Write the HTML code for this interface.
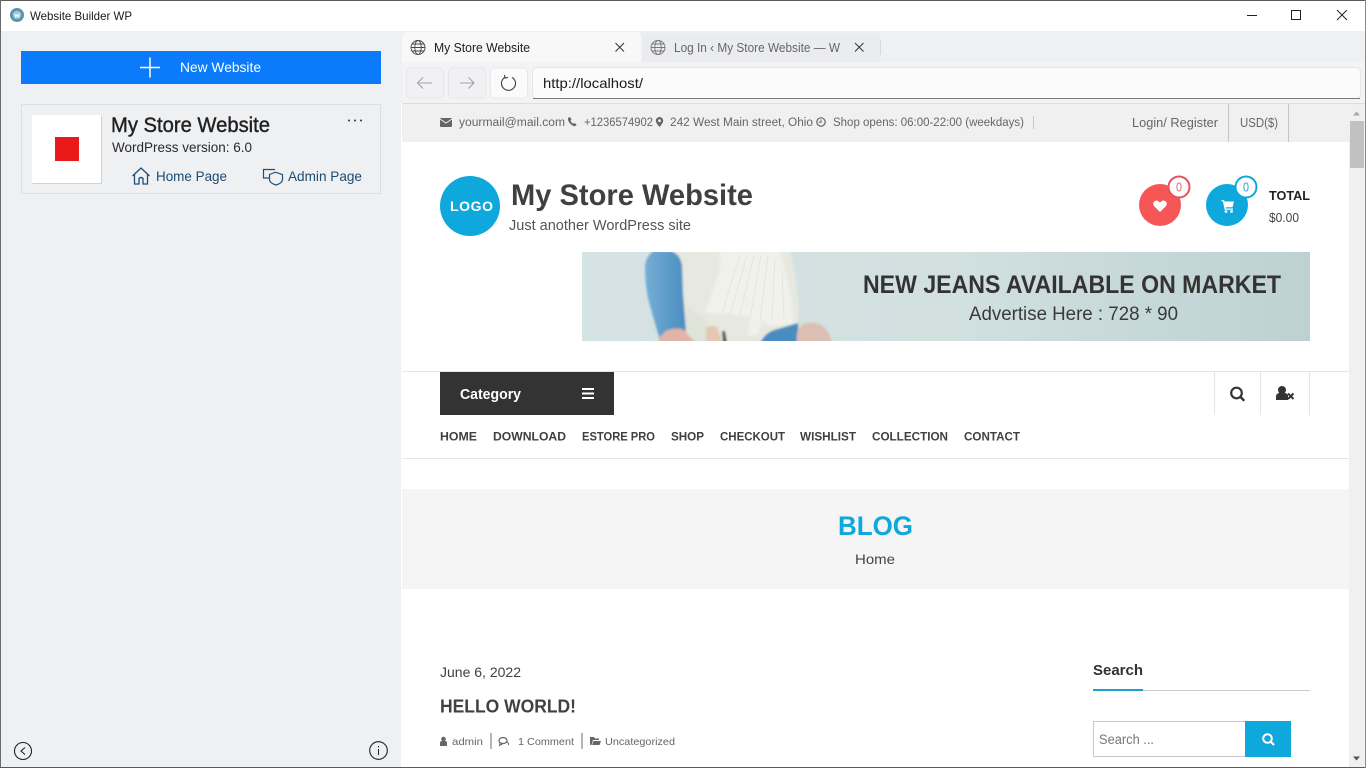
<!DOCTYPE html>
<html lang="en">
<head>
<meta charset="utf-8">
<title>Website Builder WP</title>
<style>
html,body{margin:0;padding:0;width:1366px;height:768px;overflow:hidden;background:#fff}
svg{display:block;position:absolute;left:0;top:0}
text{font-family:"Liberation Sans",Arial,sans-serif;white-space:pre}
.b{font-weight:700}
</style>
</head>
<body>
<svg width="1366" height="768" viewBox="0 0 1366 768" xmlns="http://www.w3.org/2000/svg">
<defs>
<clipPath id="bn"><rect x="582" y="252" width="728" height="89"/></clipPath>
<linearGradient id="bg" x1="0" x2="1" y1="0" y2="0"><stop offset="0" stop-color="#d6e3e4"/><stop offset=".5" stop-color="#d2e0e0"/><stop offset="1" stop-color="#bdd1d3"/></linearGradient>
<linearGradient id="jean" x1="0" x2="1" y1="0" y2="0"><stop offset="0" stop-color="#75aed5"/><stop offset="1" stop-color="#4a8dc0"/></linearGradient>
<filter id="sf" x="-5%" y="-5%" width="110%" height="110%"><feGaussianBlur stdDeviation="1"/></filter>
</defs>

<!-- window -->
<rect width="1366" height="768" fill="#fff"/>
<rect x="1" y="31" width="400" height="736" fill="#eff0f2"/>
<rect x="401" y="31" width="965" height="72" fill="#eff0f2"/>

<!-- titlebar -->
<circle cx="17" cy="15" r="7" fill="#5a93ad"/><circle cx="17" cy="15" r="4.2" fill="#9cc4d6"/>
<path d="M14.5 13.5l1.3 3.5 1.2-2.6 1.2 2.6 1.3-3.5" fill="none" stroke="#fff" stroke-width="1"/>
<text x="30" y="20" font-size="12" fill="#1a1a1a" textLength="102" lengthAdjust="spacingAndGlyphs">Website Builder WP</text>
<path d="M1247 15.500h10" stroke="#222" stroke-width="1"/>
<rect x="1291.500" y="10.500" width="9" height="9" fill="none" stroke="#222" stroke-width="1"/>
<path d="M1337 10l10 10M1347 10l-10 10" stroke="#222" stroke-width="1"/>

<!-- sidebar -->
<rect x="21" y="51" width="360" height="33" fill="#0b7bfb"/>
<path d="M150 57.500v20M140 67.500h20" stroke="#fff" stroke-width="1.500"/>
<text x="180" y="72" font-size="14" fill="#fff" textLength="81" lengthAdjust="spacingAndGlyphs">New Website</text>
<rect x="21.500" y="104.500" width="359" height="89" fill="#eff0f2" stroke="#dedfe2"/>
<rect x="32" y="115" width="69.500" height="68.500" fill="#fff"/>
<path d="M32.500 183.500h69v-68" fill="none" stroke="#d0d1d4"/>
<rect x="55" y="137" width="24" height="24" fill="#ea1a1a"/>
<text x="111" y="132" font-size="21" fill="#202020" textLength="159" lengthAdjust="spacingAndGlyphs" stroke="#202020" stroke-width=".4">My Store Website</text>
<text x="112" y="152" font-size="14" fill="#2a2a2a" textLength="140" lengthAdjust="spacingAndGlyphs">WordPress version: 6.0</text>
<circle cx="349" cy="120.500" r="1" fill="#333"/><circle cx="355" cy="120.500" r="1" fill="#333"/><circle cx="361" cy="120.500" r="1" fill="#333"/>
<path d="M132.500 176l8.500-8 8.500 8M134.500 174.500v9.500h4.500v-5.500q2-2 4 0v5.500h4.500v-9.500" fill="none" stroke="#1f4e79" stroke-width="1.300"/>
<text x="156" y="181" font-size="14" fill="#1b4a72" textLength="71" lengthAdjust="spacingAndGlyphs">Home Page</text>
<path d="M275 169.500h-11.500v8.500h6" fill="none" stroke="#1f4e79" stroke-width="1.200"/>
<path d="M269.500 174.500l6-2.300 7 2.300v5q0 3.500-6.500 5.500q-6.500-2-6.500-5.500z" fill="#eff0f2" stroke="#1f4e79" stroke-width="1.200"/>
<text x="288" y="181" font-size="14" fill="#1b4a72" textLength="74" lengthAdjust="spacingAndGlyphs">Admin Page</text>
<circle cx="23" cy="751" r="8.500" fill="none" stroke="#222" stroke-width="1.100"/>
<path d="M25 747.500l-4 3.500 4 3.500" fill="none" stroke="#222" stroke-width="1.100"/>
<circle cx="378.500" cy="750.500" r="8.800" fill="none" stroke="#222" stroke-width="1.100"/>
<path d="M378.500 749v6M378.500 746v1.400" stroke="#222" stroke-width="1"/>

<!-- tabs -->
<path d="M402 62v-24q0-6 6-6h227q6 0 6 6v24z" fill="#f8f8f9"/>
<path d="M642 62v-26q0-3 3-3h235v29z" fill="#ebecee"/>
<rect x="402" y="62" width="964" height="41" fill="#f3f3f5"/>
<g fill="none" stroke="#444" stroke-width=".9"><circle cx="418" cy="47.500" r="7"/><ellipse cx="418" cy="47.500" rx="3.200" ry="7"/><path d="M411 47.500h14M412 44h12M412 51h12"/></g>
<text x="434" y="52" font-size="12.500" fill="#1d1d1d" textLength="96" lengthAdjust="spacingAndGlyphs">My Store Website</text>
<path d="M615.500 43l8.500 8.500M624 43l-8.500 8.500" stroke="#333" stroke-width="1"/>
<g fill="none" stroke="#777" stroke-width=".9"><circle cx="658" cy="47.500" r="7"/><ellipse cx="658" cy="47.500" rx="3.200" ry="7"/><path d="M651 47.500h14M652 44h12M652 51h12"/></g>
<text x="674" y="52" font-size="12.500" fill="#666" textLength="166" lengthAdjust="spacingAndGlyphs">Log In ‹ My Store Website — W</text>
<path d="M855 43l8.500 8.500M863.500 43l-8.500 8.500" stroke="#333" stroke-width="1"/>
<path d="M880.500 40v15" stroke="#d8d8da"/>

<!-- toolbar -->
<rect x="406.500" y="68" width="37" height="30" rx="4" fill="#f1f1f3" stroke="#e6e6e8"/>
<rect x="448.500" y="68" width="37" height="30" rx="4" fill="#f1f1f3" stroke="#e6e6e8"/>
<rect x="490.500" y="68" width="37" height="30" rx="4" fill="#fbfbfb" stroke="#e8e8ea"/>
<path d="M418 83h14M423 77.500l-5.500 5.500 5.500 5.500" fill="none" stroke="#a2a2a4" stroke-width="1.100"/>
<path d="M460 83h14M468.500 77.500l5.500 5.500-5.500 5.500" fill="none" stroke="#a2a2a4" stroke-width="1.100"/>
<path d="M505 77.300a7 7 0 1 0 7 0M504.500 75l.5 3 3-.5" fill="none" stroke="#333" stroke-width="1"/>
<rect x="532.500" y="67.500" width="828" height="31" rx="4" fill="#fbfbfb" stroke="#e6e6e8"/>
<path d="M533 98.500h827" stroke="#7a7a7a"/>
<text x="543" y="88" font-size="14" fill="#1a1a1a" textLength="100" lengthAdjust="spacingAndGlyphs">http://localhost/</text>

<!-- page -->
<rect x="402" y="103" width="964" height="664" fill="#fff"/>
<rect x="402" y="103" width="964" height="1" fill="#dcdcdc"/>
<rect x="402" y="104" width="947" height="38" fill="#f0f0f0"/>

<!-- topbar -->
<rect x="440" y="118" width="12" height="9" rx="1" fill="#666"/><path d="M440 119l6 4 6-4" fill="none" stroke="#f0f0f0" stroke-width="1"/>
<text x="459" y="126" font-size="11.500" fill="#666" textLength="106" lengthAdjust="spacingAndGlyphs">yourmail@mail.com</text>
<path d="M568.500 117.500q-1 1 0 3.800q1.500 3.200 5 4.700q2 .5 3.200-1l-2-2-1.500.8q-2-1-2.700-3l1-1.200-1.500-2.600z" fill="#666"/>
<text x="584" y="126" font-size="11.500" fill="#666" textLength="69" lengthAdjust="spacingAndGlyphs">+1236574902</text>
<path d="M659.500 117a3.700 3.700 0 0 0-3.700 3.700q0 2 3.700 6.300q3.700-4.300 3.700-6.300a3.700 3.700 0 0 0-3.700-3.700zm0 2.300a1.400 1.400 0 1 1 0 2.800a1.400 1.400 0 0 1 0-2.800z" fill="#666"/>
<text x="670" y="126" font-size="11.500" fill="#666" textLength="143" lengthAdjust="spacingAndGlyphs">242 West Main street, Ohio</text>
<circle cx="821" cy="122" r="4.200" fill="none" stroke="#666" stroke-width="1.200"/><path d="M821 119.500v2.800h-2.300" fill="none" stroke="#666"/>
<text x="833" y="126" font-size="11.500" fill="#666" textLength="191" lengthAdjust="spacingAndGlyphs">Shop opens: 06:00-22:00 (weekdays)</text>
<path d="M1033.500 116v13" stroke="#c6c6c6"/>
<text x="1132" y="127" font-size="13" fill="#666" textLength="86" lengthAdjust="spacingAndGlyphs">Login/ Register</text>
<path d="M1228.500 104v38M1288.500 104v38" stroke="#c4c4c4"/>
<text x="1240" y="127" font-size="13" fill="#666" textLength="38" lengthAdjust="spacingAndGlyphs">USD($)</text>

<!-- header -->
<circle cx="470" cy="206" r="30" fill="#0ea8dd"/>
<text class="b" x="450" y="211" font-size="14" fill="#fff" textLength="43" lengthAdjust="spacing">LOGO</text>
<text class="b" x="511" y="205" font-size="30" fill="#404040" textLength="242" lengthAdjust="spacingAndGlyphs">My Store Website</text>
<text x="509" y="230" font-size="14.500" fill="#555" textLength="182" lengthAdjust="spacingAndGlyphs">Just another WordPress site</text>

<circle cx="1160" cy="205" r="21" fill="#f65656"/>
<path d="M1160 212l-5.800-5.800q-1.700-2.200-.5-4.200q1.900-2.500 4.500-1l1.800 1.500 1.800-1.500q2.600-1.500 4.500 1q1.200 2-.5 4.200z" fill="#fff"/>
<circle cx="1179" cy="187" r="10.500" fill="#fff" stroke="#e8515c" stroke-width="2"/>
<text x="1176" y="191.500" font-size="12.500" fill="#e8606a" textLength="6" lengthAdjust="spacingAndGlyphs">0</text>
<circle cx="1227" cy="205" r="21" fill="#0ea8dd"/>
<path d="M1221.500 200h2.500l.6 1.500h9.400l-1.500 5.800h-6.800l.3 1.200h7v1.300h-8.300l-1.800-8.500h-1.400z" fill="#fff"/>
<circle cx="1226" cy="211.500" r="1.400" fill="#fff"/><circle cx="1231.500" cy="211.500" r="1.400" fill="#fff"/>
<circle cx="1246" cy="187" r="10.500" fill="#fff" stroke="#0ea8dd" stroke-width="2"/>
<text x="1243" y="191.500" font-size="12.500" fill="#2f9fd0" textLength="6" lengthAdjust="spacingAndGlyphs">0</text>
<text class="b" x="1269" y="200" font-size="12.500" fill="#222" textLength="41" lengthAdjust="spacingAndGlyphs">TOTAL</text>
<text x="1269" y="222" font-size="12.500" fill="#444" textLength="30" lengthAdjust="spacingAndGlyphs">$0.00</text>

<!-- banner -->
<rect x="582" y="252" width="728" height="89" fill="url(#bg)"/>
<g clip-path="url(#bn)">
<g filter="url(#sf)">
<path d="M672 250h118l5 25 4 30-1 20-34 16h-76l-14-45z" fill="#e7e9e0"/>
<path d="M645 266q1-10 9-15h17q9 3 11 14l1 28 3 38-26 9q-9-30-12-42q-3-14-3-32z" fill="url(#jean)"/>
<path d="M720 250h60l6 24 6 30 1 20-24 2-6-6-6 15h-9l2-18-24-3-21-1 7-20 8-24z" fill="#f0f1eb"/>
<path d="M686 305l19 14 6 22h-24z" fill="#dfe3d9"/>
<path d="M760 343q5-10 14-13l24-7v20z" fill="#4a8cbf"/>
<path d="M797 343q-2-18 10-20q20-3 25 20z" fill="#dcbfb2"/>
<path d="M658 343q3-10 10-13q10-3 16 0l6 7 7 6z" fill="#e0b4a6"/>
<path d="M706 327q7-3 12 1l4 15h-16z" fill="#e5c8b2"/>
<path d="M722 331l1 12h4l-2-12z" fill="#3a4256"/>
</g>
<g stroke="#d9dcd2" stroke-width=".7" fill="none" opacity=".7">
<path d="M740 255l-18 58M747 255l-17 60M754 255l-14 60M761 255l-11 64M768 255l-8 66M775 258l-3 62M782 268l2 52"/>
</g>
</g>
<text class="b" x="863" y="293" font-size="25" fill="#333" textLength="418" lengthAdjust="spacingAndGlyphs">NEW JEANS AVAILABLE ON MARKET</text>
<text x="969" y="320" font-size="19" fill="#3a3a3a" textLength="209" lengthAdjust="spacingAndGlyphs">Advertise Here : 728 * 90</text>

<!-- nav -->
<rect x="402" y="371" width="947" height="1" fill="#e5e5e5"/>
<rect x="440" y="372" width="174" height="43" fill="#333"/>
<text class="b" x="460" y="399" font-size="14.500" fill="#fff" textLength="61" lengthAdjust="spacingAndGlyphs">Category</text>
<path d="M582 389h12M582 393.500h12M582 398h12" stroke="#fff" stroke-width="2"/>
<path d="M1214.500 372v43M1260.500 372v43M1309.500 372v43" stroke="#e5e5e5"/>
<circle cx="1236.500" cy="393" r="5.300" fill="none" stroke="#333" stroke-width="2.200"/>
<path d="M1240.500 397l3.800 3.800" stroke="#333" stroke-width="2.400"/>
<circle cx="1282" cy="390" r="4" fill="#333"/>
<path d="M1276 400v-3q0-3.500 3-4h6q2.500.5 3 2.500v4.500z" fill="#333"/>
<path d="M1288 393.500l5.500 5.500M1293.500 393.500l-5.500 5.500" stroke="#333" stroke-width="2"/>
<g font-size="12" font-weight="700" fill="#404040">
<text x="440" y="440.500" textLength="37" lengthAdjust="spacingAndGlyphs">HOME</text>
<text x="493" y="440.500" textLength="73" lengthAdjust="spacingAndGlyphs">DOWNLOAD</text>
<text x="582" y="440.500" textLength="73" lengthAdjust="spacingAndGlyphs">ESTORE PRO</text>
<text x="671" y="440.500" textLength="33" lengthAdjust="spacingAndGlyphs">SHOP</text>
<text x="720" y="440.500" textLength="65" lengthAdjust="spacingAndGlyphs">CHECKOUT</text>
<text x="800" y="440.500" textLength="56" lengthAdjust="spacingAndGlyphs">WISHLIST</text>
<text x="872" y="440.500" textLength="76" lengthAdjust="spacingAndGlyphs">COLLECTION</text>
<text x="964" y="440.500" textLength="56" lengthAdjust="spacingAndGlyphs">CONTACT</text>
</g>
<rect x="402" y="458" width="947" height="1" fill="#e5e5e5"/>

<!-- blog band -->
<rect x="402" y="489" width="947" height="100" fill="#f5f5f5"/>
<text class="b" x="838" y="535" font-size="27" fill="#0ea8dd" textLength="75" lengthAdjust="spacingAndGlyphs">BLOG</text>
<text x="855" y="564" font-size="14" fill="#444" textLength="40" lengthAdjust="spacingAndGlyphs">Home</text>

<!-- post -->
<text x="440" y="677" font-size="14" fill="#404040" textLength="81" lengthAdjust="spacingAndGlyphs">June 6, 2022</text>
<text class="b" x="440" y="712.500" font-size="18" fill="#404040" textLength="136" lengthAdjust="spacingAndGlyphs">HELLO WORLD!</text>
<circle cx="443.500" cy="739" r="2.300" fill="#666"/><path d="M440 746v-3q0-2 2-2h3q2 0 2 2v3z" fill="#666"/>
<text x="452" y="745" font-size="10.500" fill="#666" textLength="31" lengthAdjust="spacingAndGlyphs">admin</text>
<rect x="490" y="733" width="2" height="16" fill="#b5b5b5"/>
<ellipse cx="503" cy="740.500" rx="4" ry="3" fill="none" stroke="#666" stroke-width="1.300"/><path d="M500 743l-.5 2.500 3-1.500M507 742q2 1 1.500 3" fill="none" stroke="#666"/>
<text x="518" y="745" font-size="10.500" fill="#666" textLength="56" lengthAdjust="spacingAndGlyphs">1 Comment</text>
<rect x="581" y="733" width="2" height="16" fill="#b5b5b5"/>
<path d="M590 745v-8h4l1 1.500h4v1.500h-6l-1.500 5zM592 745l1.500-4h7.500l-1.500 4z" fill="#666"/>
<text x="605" y="745" font-size="10.500" fill="#666" textLength="70" lengthAdjust="spacingAndGlyphs">Uncategorized</text>

<!-- sidebar widget -->
<text class="b" x="1093" y="675" font-size="15" fill="#333" textLength="50" lengthAdjust="spacingAndGlyphs">Search</text>
<rect x="1093" y="690" width="217" height="1" fill="#ccc"/>
<rect x="1093" y="689" width="50" height="2" fill="#1f9fd0"/>
<rect x="1093.500" y="721.500" width="152" height="35" fill="#fff" stroke="#c8c8c8"/>
<text x="1099" y="744" font-size="13.500" fill="#777" textLength="55" lengthAdjust="spacingAndGlyphs">Search ...</text>
<rect x="1245" y="721" width="46" height="36" fill="#0ea8dd"/>
<circle cx="1267.500" cy="738.500" r="4.300" fill="none" stroke="#fff" stroke-width="2"/>
<path d="M1270.500 741.500l3.500 3.500" stroke="#fff" stroke-width="2.200"/>

<!-- scrollbar -->
<rect x="1349" y="104" width="17" height="663" fill="#f0f0f0"/>
<rect x="1350" y="121" width="14" height="47" fill="#c1c1c1"/>
<path d="M1353 115.500l3.500-4 3.500 4z" fill="#a8a8a8"/>
<path d="M1353 756.500l3.500 4 3.500-4z" fill="#555"/>

<!-- window border -->
<rect x="0" y="0" width="1366" height="1" fill="#5a5a5a"/>
<rect x="0" y="0" width="1" height="768" fill="#6a6a6a"/>
<rect x="0" y="767" width="1366" height="1" fill="#5a5a5a"/>
<rect x="1365" y="0" width="1" height="768" fill="#8a8a8a"/>
</svg>
</body>
</html>
